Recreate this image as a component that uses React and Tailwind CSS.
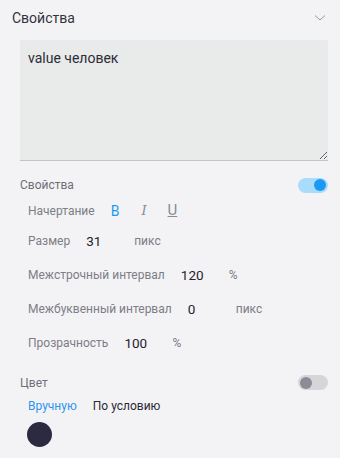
import React, { useState } from "react";

const Toggle = ({ on, onClick }) => (
    <button
        onClick={onClick}
        className={`relative w-[30px] h-[15px] rounded-full ${on ? "bg-[#a9dcfb]" : "bg-[#d5d5da]"}`}
    >
        <span
            className={`absolute top-[1.5px] w-[12px] h-[12px] rounded-full ${on ? "left-[16px] bg-[#1b99f6]" : "left-[2px] bg-[#8d8c96]"}`}
        />
    </button>
);

const Row = ({ label, value, unit }) => (
    <div className="h-[34px] flex items-center pl-2 text-[12px]">
        <span className="text-[#7d7d86]">{label}</span>
        <span className="ml-4 w-[48px] text-[13.5px] text-[#23222e]">{value}</span>
        <span className="text-[#7d7d86]">{unit}</span>
    </div>
);

export default function App() {
    const [props, setProps] = useState(true);
    const [color, setColor] = useState(false);
    return (
        <div className="w-[340px] h-[458px] bg-[#f3f3f5] font-['Roboto',sans-serif] overflow-hidden">
            <div className="h-9 flex items-center justify-between px-3">
                <span className="text-[14px] text-[#34333d]">Свойства</span>
                <svg width="12" height="8" viewBox="0 0 12 8" className="mr-[2px]">
                    <path d="M1 1.5 L6 6 L11 1.5" fill="none" stroke="#9a9aa2" strokeWidth="1" />
                </svg>
            </div>
            <div className="pl-5 pr-3">
                <textarea
                    defaultValue="value человек"
                    className="mt-1 block w-full h-[121px] bg-[#e9eaea] border-b border-[#c4c4c8] px-2 py-[8px] text-[14px] text-[#2d2c38] outline-none resize-y"
                />
                <div className="mt-4 h-4 flex items-center justify-between">
                    <span className="text-[12px] text-[#6f6f78]">Свойства</span>
                    <Toggle on={props} onClick={() => setProps(!props)} />
                </div>
                <div className="mt-1 h-[27px] flex items-center pl-2 text-[12px]">
                    <span className="text-[#7d7d86]">Начертание</span>
                    <div className="ml-4 flex items-center text-[14px]">
                        <span className="text-[#1b99f6] leading-none font-normal">B</span>
                        <span className="ml-[22px] text-[#8a8a92] italic leading-none font-['DejaVu_Serif',serif] text-[13px]">I</span>
                        <span className="ml-[21px] text-[#8a8a92] underline leading-none text-[15px]">U</span>
                    </div>
                </div>
                <Row label="Размер" value="31" unit="пикс" />
                <Row label="Межстрочный интервал" value="120" unit="%" />
                <Row label="Межбуквенный интервал" value="0" unit="пикс" />
                <Row label="Прозрачность" value="100" unit="%" />
                <div className="mt-[15px] h-[15px] flex items-center justify-between">
                    <span className="text-[12px] text-[#6f6f78]">Цвет</span>
                    <Toggle on={color} onClick={() => setColor(!color)} />
                </div>
                <div className="mt-[6px] h-5 flex items-center gap-4 pl-2 text-[12px]">
                    <span className="text-[#2b96ef]">Вручную</span>
                    <span className="text-[#2a2935]">По условию</span>
                </div>
                <div className="mt-[6px] ml-[7px] w-[25px] h-[25px] rounded-full bg-[#2c2a40]" />
            </div>
        </div>
    );
}
